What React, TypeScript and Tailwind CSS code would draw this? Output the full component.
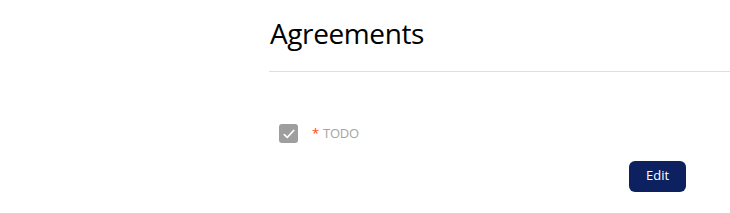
export default function App() {
  return (
    <div className="w-[730px] h-[213px] bg-white pl-[269px] font-['Open_Sans',sans-serif] overflow-hidden">
      <div className="pt-[14px]">
        <h1 className="pl-px text-[28px] leading-[38px] text-black tracking-[-0.4px]">Agreements</h1>
        <div className="mt-[19px] h-px bg-[#dedede]" />
      </div>
      <div className="mt-[52px] pl-[10px] flex items-center gap-[14px]">
        <span className="w-[19px] h-[19px] rounded-[3px] bg-[#9e9e9e] flex items-center justify-center">
          <svg width="14" height="14" viewBox="0 0 24 24" fill="none" stroke="white" strokeWidth="3" strokeLinecap="round" strokeLinejoin="round">
            <path d="M4 13l5 5L20 6" />
          </svg>
        </span>
        <span className="text-[13px] text-[#a4a4a4] tracking-[-0.2px]">
          <span className="text-[#ff4a14] mr-[4px]">*</span>TODO
        </span>
      </div>
      <div className="mt-[17px] pl-[360px]">
        <button className="w-[57px] h-[31px] rounded-[6px] bg-[#0d2160] text-white text-[13px]">Edit</button>
      </div>
    </div>
  );
}
